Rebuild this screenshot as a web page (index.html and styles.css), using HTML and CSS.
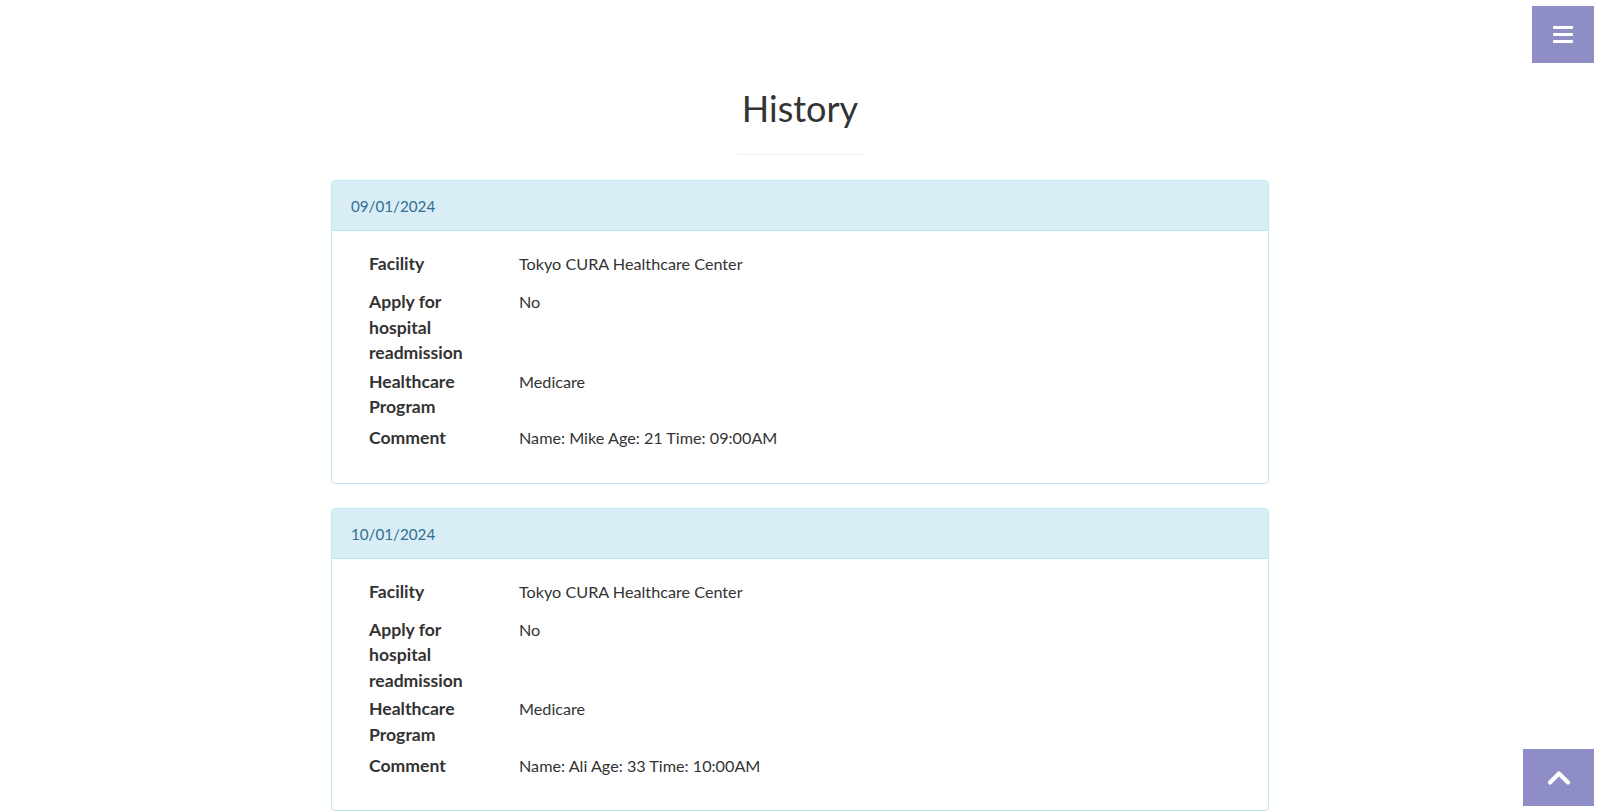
FILE: index.html
```html
<!DOCTYPE html>
<html lang="en">
<head>
<meta charset="utf-8">
<title>History</title>
<link rel="stylesheet" href="styles.css">
</head>
<body>
<a class="menu-toggle" href="#">
  <svg width="20" height="17" viewBox="0 0 20 17"><rect x="0" y="0" width="20" height="3" rx="1"/><rect x="0" y="7" width="20" height="3" rx="1"/><rect x="0" y="14" width="20" height="3" rx="1"/></svg>
</a>

<section class="history">
  <h2 class="title">History</h2>
  <hr class="title-rule">

  <div class="panel">
    <div class="panel-heading">09/01/2024</div>
    <div class="panel-body">
      <div class="field field-first">
        <div class="label">Facility</div>
        <div class="value">Tokyo CURA Healthcare Center</div>
      </div>
      <div class="field field-second">
        <div class="label">Apply for hospital readmission</div>
        <div class="value">No</div>
      </div>
      <div class="field field-third">
        <div class="label">Healthcare Program</div>
        <div class="value">Medicare</div>
      </div>
      <div class="field">
        <div class="label">Comment</div>
        <div class="value">Name: Mike Age: 21 Time: 09:00AM</div>
      </div>
    </div>
  </div>

  <div class="panel">
    <div class="panel-heading">10/01/2024</div>
    <div class="panel-body">
      <div class="field field-first">
        <div class="label">Facility</div>
        <div class="value">Tokyo CURA Healthcare Center</div>
      </div>
      <div class="field field-second">
        <div class="label">Apply for hospital readmission</div>
        <div class="value">No</div>
      </div>
      <div class="field field-third">
        <div class="label">Healthcare Program</div>
        <div class="value">Medicare</div>
      </div>
      <div class="field">
        <div class="label">Comment</div>
        <div class="value">Name: Ali Age: 33 Time: 10:00AM</div>
      </div>
    </div>
  </div>
</section>

<a class="to-top" href="#">
  <svg width="24" height="17" viewBox="0 0 24 17"><polyline points="3,13.5 12,4.5 21,13.5" fill="none" stroke="#fff" stroke-width="4.2" stroke-linecap="round" stroke-linejoin="round"/></svg>
</a>
</body>
</html>
```

FILE: styles.css
```css
html, body {
  margin: 0;
  padding: 0;
  background: #fff;
}

body {
  font-family: Lato, "Liberation Sans", sans-serif;
  font-size: 16.2px;
  line-height: 25.5px;
  color: #333;
}

.history {
  max-width: 938px;
  margin: 0 auto;
  display: flex;
  flex-direction: column;
}

.title {
  margin: 88px 0 0;
  font-size: 36px;
  line-height: 40px;
  font-weight: 400;
  text-align: center;
  color: #333;
}

.title-rule {
  width: 125px;
  margin: 26px auto 25px;
  border: 0;
  border-top: 1px solid #eee;
  height: 0;
}

.panel {
  border: 1px solid #bce8f1;
  border-radius: 4px;
  margin-bottom: 24px;
  overflow: hidden;
}

.panel:last-child {
  margin-bottom: 0;
}

.panel-heading {
  background: #d9edf7;
  color: #31708f;
  font-size: 15.2px;
  border-bottom: 1px solid #bce8f1;
  padding: 13px 19px 10.5px;
}

.panel-body {
  padding: 20px 20px 32px 37px;
  display: flex;
  flex-direction: column;
}

.field {
  display: grid;
  grid-template-columns: 120px 1fr;
  column-gap: 30px;
}

.field-first {
  margin-bottom: 12.5px;
}

.field-second {
  margin-bottom: 3px;
}

.field-third {
  margin-bottom: 5.5px;
}

.label {
  font-weight: 700;
  font-size: 17.6px;
}

.menu-toggle,
.to-top {
  position: fixed;
  right: 6px;
  height: 57px;
  background: #8f8dc5;
  display: flex;
  align-items: center;
  justify-content: center;
}

.menu-toggle {
  top: 6px;
  width: 62px;
}

.menu-toggle svg {
  fill: #fff;
}

.to-top {
  bottom: 6px;
  width: 71px;
}
```
